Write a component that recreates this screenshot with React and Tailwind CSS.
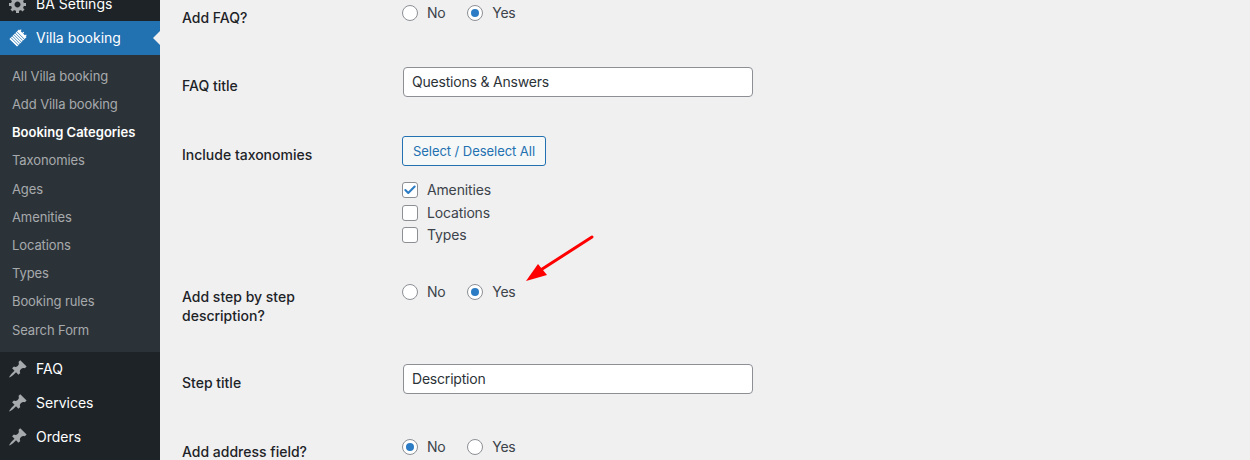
import { Check } from "lucide-react"

const subItems = [
  "All Villa booking",
  "Add Villa booking",
  "Booking Categories",
  "Taxonomies",
  "Ages",
  "Amenities",
  "Locations",
  "Types",
  "Booking rules",
  "Search Form",
]

function PinIcon() {
  return (
    <svg className="w-5 h-5 text-[#a7aaad]" viewBox="0 0 20 20" fill="currentColor">
      <path d="M10.44 3.02l1.82-1.82 6.36 6.35-1.83 1.82c-1.05-.68-2.48-.57-3.41.36l-.75.75c-.92.93-1.04 2.35-.35 3.41l-1.83 1.82-2.41-2.41-2.8 2.79c-.42.42-3.38 2.71-3.8 2.29s1.86-3.39 2.28-3.81l2.79-2.79L4.1 9.36l1.83-1.82c1.05.69 2.48.57 3.4-.36l.75-.75c.93-.92 1.05-2.35.36-3.41z" />
    </svg>
  )
}

function GearIcon() {
  return (
    <svg className="w-5 h-5 text-[#a7aaad]" viewBox="0 0 20 20" fill="currentColor">
      <path d="M18 12h-2.18c-.17.7-.44 1.35-.81 1.93l1.54 1.54-2.1 2.1-1.54-1.54c-.58.36-1.23.63-1.91.79V19H8v-2.18c-.68-.16-1.33-.43-1.91-.79l-1.54 1.54-2.12-2.12 1.54-1.54c-.36-.58-.63-1.23-.79-1.91H1V9.03h2.17c.16-.7.44-1.35.8-1.94L2.43 5.55l2.1-2.1 1.54 1.54c.58-.37 1.24-.64 1.93-.81V2h3v2.18c.68.16 1.33.43 1.91.79l1.54-1.54 2.12 2.12-1.54 1.54c.36.59.64 1.24.8 1.94H18V12zm-8.5 1.5c1.66 0 3-1.34 3-3s-1.34-3-3-3-3 1.34-3 3 1.34 3 3 3z" />
    </svg>
  )
}

function NoteIcon() {
  return (
    <svg className="w-[22px] h-[22px]" viewBox="0 0 22 22">
      <g transform="rotate(45 11 11)">
        <rect x="5" y="3.500" width="12" height="15" rx="0.5" fill="#fff" />
        <path d="M5 7h12M5 9.300h12M5 11.600h12M5 13.900h12M5 16.200h12" stroke="#2271b1" strokeWidth="0.8" />
        <path d="M7 2v3M11 2v3M15 2v3" stroke="#fff" strokeWidth="1.200" />
      </g>
    </svg>
  )
}

function MenuRow({ icon, label }) {
  return (
    <div className="flex items-center h-[34px] pl-[8px] gap-[8px] text-sm text-white">
      <span className="w-5 flex justify-center">{icon}</span>
      <span>{label}</span>
    </div>
  )
}

function Radio({ label, checked }) {
  return (
    <label className="flex items-center gap-[9px]">
      <span className="w-4 h-4 rounded-full bg-white border border-[#8c8f94] flex items-center justify-center">
        {checked && <span className="w-2 h-2 rounded-full bg-[#2b7cc4]" />}
      </span>
      <span>{label}</span>
    </label>
  )
}

function RadioGroup({ value }) {
  return (
    <div className="flex items-center gap-[22px] h-5 text-sm tracking-[-0.3px] text-[#3c434a]">
      <Radio label="No" checked={value === "No"} />
      <Radio label="Yes" checked={value === "Yes"} />
    </div>
  )
}

function Checkbox({ label, checked }) {
  return (
    <label className="flex items-center gap-[9px] h-[22.5px] text-sm tracking-[-0.15px] text-[#3c434a]">
      <span className="w-4 h-4 rounded-[3px] bg-white border border-[#8c8f94] flex items-center justify-center">
        {checked && <Check className="w-3.5 h-3.5 text-[#2b7cc4]" strokeWidth={3.5} />}
      </span>
      <span>{label}</span>
    </label>
  )
}

function TextField({ value }) {
  return (
    <div className="ml-px w-[350px] h-[30px] rounded bg-white border border-[#8c8f94] px-[8px] flex items-center text-sm tracking-[-0.2px] text-[#2c3338]">
      {value}
    </div>
  )
}

function Label({ children, className }) {
  return (
    <div className={`w-[220px] pr-[20px] shrink-0 text-[14px] leading-[19px] font-medium text-[#1d2327] ${className}`}>
      {children}
    </div>
  )
}

export default function App() {
  return (
    <div className="flex h-[460px] w-[1250px] overflow-hidden bg-[#f0f0f1] font-['Inter','Liberation_Sans',sans-serif]">
      {/* Sidebar */}
      <aside className="w-[160px] shrink-0 bg-[#1d2327]">
        <div className="-mt-[13px]">
          <MenuRow icon={<GearIcon />} label="BA Settings" />
        </div>
        <div className="relative bg-[#2271b1]">
          <MenuRow icon={<NoteIcon />} label="Villa booking" />
          <span className="absolute right-0 top-[10px] border-y-[7px] border-r-[7px] border-y-transparent border-r-[#f0f0f1]" />
        </div>
        <div className="bg-[#2c3338] pt-[7.5px] pb-[7.5px] text-[13px] tracking-[-0.1px]">
          {subItems.map((item) => (
            <div
              key={item}
              className={`h-[28.2px] flex items-center pl-3 ${
                item === "Booking Categories" ? "text-white font-semibold tracking-normal" : "text-[#a7aaad]"
              }`}
            >
              {item}
            </div>
          ))}
        </div>
        <MenuRow icon={<PinIcon />} label="FAQ" />
        <MenuRow icon={<PinIcon />} label="Services" />
        <MenuRow icon={<PinIcon />} label="Orders" />
      </aside>

      {/* Settings form */}
      <main className="relative flex-1 pl-[22px]">
        <div className="flex h-[67px] pt-[3px]">
          <Label className="pt-[5px]">Add FAQ?</Label>
          <RadioGroup value="Yes" />
        </div>
        <div className="flex h-[69px]">
          <Label className="pt-[9px]">FAQ title</Label>
          <TextField value="Questions & Answers" />
        </div>
        <div className="flex h-[146px]">
          <Label className="pt-[9px]">Include taxonomies</Label>
          <div>
            <div className="w-[144px] h-[30px] pt-px rounded-[3px] bg-[#f6f7f7] border border-[#2271b1] text-[#2271b1] text-[13px] tracking-[-0.05px] flex items-center justify-center">
              Select / Deselect All
            </div>
            <div className="mt-[12.75px]">
              <Checkbox label="Amenities" checked />
              <Checkbox label="Locations" />
              <Checkbox label="Types" />
            </div>
          </div>
        </div>
        <div className="flex h-[82px]">
          <Label className="pt-[5px]">
            Add step by step
            <br />
            description?
          </Label>
          <RadioGroup value="Yes" />
        </div>
        <div className="flex h-[70px]">
          <Label className="pt-[9px]">Step title</Label>
          <TextField value="Description" />
        </div>
        <div className="flex pt-[3px]">
          <Label className="pt-[5px]">Add address field?</Label>
          <RadioGroup value="No" />
        </div>

        {/* red annotation arrow */}
        <svg className="absolute left-[360px] top-[232px] w-[80px] h-[55px]" viewBox="0 0 80 55" fill="none">
          <path d="M72 5L16 41" stroke="#ff0000" strokeWidth="3" strokeLinecap="round" />
          <path d="M6 49L18 32L27 43Z" fill="#ff0000" />
        </svg>
      </main>
    </div>
  )
}
